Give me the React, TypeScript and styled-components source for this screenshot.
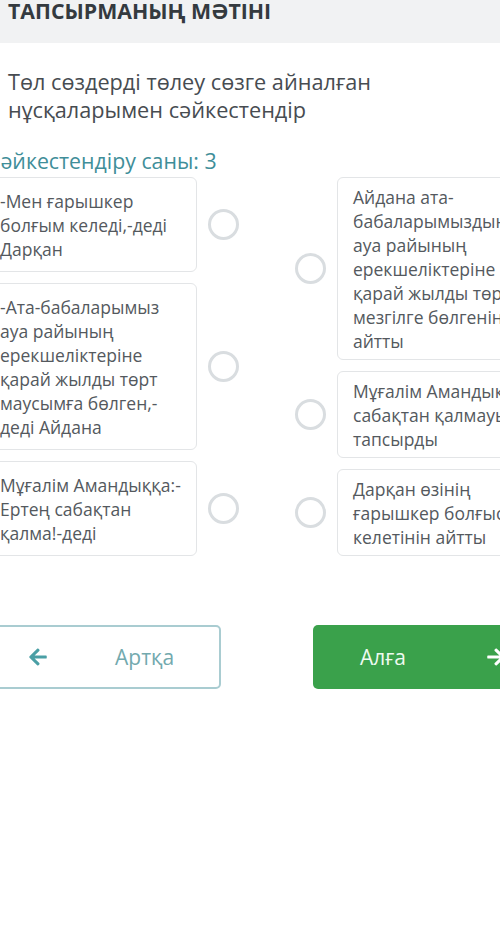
import React from "react";
import styled, { createGlobalStyle } from "styled-components";
import { FaArrowLeft, FaArrowRight } from "react-icons/fa";

const Global = createGlobalStyle`
  html, body {
    margin: 0;
    padding: 0;
    background: #ffffff;
    overflow: hidden;
  }
  body {
    font-family: "Open Sans", "Noto Sans", sans-serif;
    width: 500px;
    height: 937px;
  }
`;

const Page = styled.div`
  width: 500px;
  height: 937px;
  overflow: hidden;
  background: #fff;
`;

const Header = styled.div`
  height: 43px;
  background: #f1f2f3;
  padding-left: 8px;
  box-sizing: border-box;
`;

const HeaderTitle = styled.div`
  font-size: 21.3px;
  font-weight: 700;
  line-height: 22px;
  color: #343a3f;
  white-space: nowrap;
`;

const Main = styled.div`
  padding: 0 8px;
`;

const Question = styled.div`
  margin-top: 25px;
  font-size: 21.7px;
  line-height: 28px;
  color: #474c51;
`;

const Counter = styled.div`
  margin-top: 23px;
  margin-left: -21px;
  font-size: 21.3px;
  line-height: 28px;
  color: #3f8e99;
  white-space: nowrap;
`;

const MatchArea = styled.div`
  margin-top: 2px;
  margin-left: -24px;
  width: 566px;
  display: flex;
  gap: 56px;
`;

const Column = styled.div`
  width: 255px;
  display: flex;
  flex-direction: column;
  gap: 11px;
`;

const Row = styled.div<{ $reverse?: boolean }>`
  display: flex;
  flex-direction: ${(p) => (p.$reverse ? "row-reverse" : "row")};
  align-items: center;
  gap: 11px;
`;

const Card = styled.div<{ $pad: number }>`
  width: 214px;
  box-sizing: border-box;
  border: 1px solid #e3e5e7;
  border-radius: 6px;
  padding: ${(p) => p.$pad}px 14px ${(p) => p.$pad}px 15px;
  font-size: 17.5px;
  line-height: 24px;
  color: #54595e;
`;

const Dot = styled.div`
  width: 31px;
  height: 31px;
  flex: none;
  box-sizing: border-box;
  border: 3px solid #d9dde0;
  border-radius: 50%;
`;

const Buttons = styled.div`
  margin-top: 69px;
  margin-left: -24px;
  width: 566px;
  display: flex;
  gap: 92px;
`;

const BackButton = styled.div`
  width: 237px;
  height: 64px;
  box-sizing: border-box;
  border: 2px solid #a9ccd1;
  border-radius: 5px;
  display: flex;
  align-items: center;
  padding-left: 42px;
  color: #4a9fa5;
`;

const BackLabel = styled.span`
  margin-left: 67px;
  font-size: 21px;
  color: #72a9ae;
`;

const NextButton = styled.div`
  width: 237px;
  height: 64px;
  box-sizing: border-box;
  background: #3aa14b;
  border-radius: 5px;
  display: flex;
  align-items: center;
  justify-content: space-between;
  padding: 0 44px 0 47px;
  color: #fff;
`;

const NextLabel = styled.span`
  font-size: 21px;
  color: #eefaf0;
`;

const left = [
  "-Мен ғарышкер болғым келеді,-деді Дарқан",
  "-Ата-бабаларымыз ауа райының ерекшеліктеріне қарай жылды төрт маусымға бөлген,-деді Айдана",
  "Мұғалім Амандыққа:-Ертең сабақтан қалма!-деді",
];

const right = [
  "Айдана ата-бабаларымыздың ауа райының ерекшеліктеріне қарай жылды төрт мезгілге бөлгенін айтты",
  "Мұғалім Амандыққа сабақтан қалмауын тапсырды",
  "Дарқан өзінің ғарышкер болғысы келетінін айтты",
];

export default function App() {
  return (
    <Page>
      <Global />
      <Header>
        <HeaderTitle>ТАПСЫРМАНЫҢ МӘТІНІ</HeaderTitle>
      </Header>
      <Main>
        <Question>
          Төл сөздерді төлеу сөзге айналған
          <br />
          нұсқаларымен сәйкестендір
        </Question>
        <Counter>Сәйкестендіру саны: 3</Counter>
        <MatchArea>
          <Column>
            {left.map((t) => (
              <Row key={t}>
                <Card $pad={10.5}>{t}</Card>
                <Dot />
              </Row>
            ))}
          </Column>
          <Column>
            {right.map((t) => (
              <Row key={t} $reverse>
                <Card $pad={6.5}>{t}</Card>
                <Dot />
              </Row>
            ))}
          </Column>
        </MatchArea>
        <Buttons>
          <BackButton>
            <FaArrowLeft size={20} />
            <BackLabel>Артқа</BackLabel>
          </BackButton>
          <NextButton>
            <NextLabel>Алға</NextLabel>
            <FaArrowRight size={20} />
          </NextButton>
        </Buttons>
      </Main>
    </Page>
  );
}
